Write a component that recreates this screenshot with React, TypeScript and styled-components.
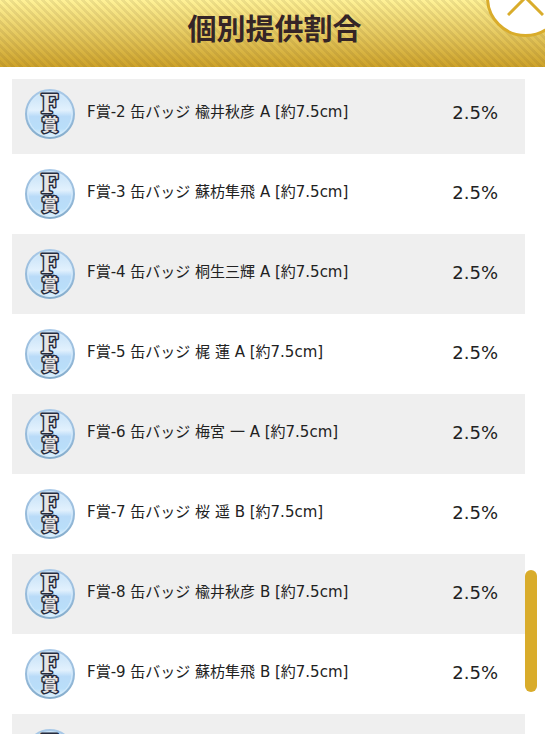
import React from 'react';
import styled, { createGlobalStyle } from 'styled-components';

const GlobalStyle = createGlobalStyle`
  *, *::before, *::after { box-sizing: border-box; }
  body {
    margin: 0;
    overflow: hidden;
    background: #fff;
    color: #222;
    font-family: "DejaVu Sans", "Noto Sans CJK JP", sans-serif;
  }
`;

const Dialog = styled.section`
  position: relative;
  display: flex;
  flex-direction: column;
  height: 100vh;
  overflow: hidden;
`;

const Header = styled.header`
  flex: none;
  padding: 10px 22px 17px 26px;
  text-align: center;
  background:
    linear-gradient(45deg, rgba(100, 75, 30, 0.11) 25%, transparent 25% 50%, rgba(100, 75, 30, 0.11) 50% 75%, transparent 75%) 0 0 / 8px 8px,
    linear-gradient(#fff297, #cda22a);
`;

const Title = styled.h2`
  margin: 0;
  color: #352527;
  font-size: 29px;
  line-height: 40px;
  font-weight: 700;
`;

const CloseButton = styled.button`
  position: absolute;
  top: -42px;
  right: -20px;
  display: grid;
  place-items: center;
  width: 79px;
  height: 79px;
  padding: 0;
  border: 3px solid #d9ac2b;
  border-radius: 50%;
  background: #fff;
  cursor: pointer;
`;

const Content = styled.div`
  flex: 1;
  min-height: 0;
  display: flex;
  margin: 12px 8px 9px 12px;
`;

const Viewport = styled.div`
  flex: 1;
  min-width: 0;
  overflow: hidden;
`;

const PrizeList = styled.ul`
  margin: -5px 0 0;
  padding: 0;
  list-style: none;
`;

const PrizeRow = styled.li`
  display: flex;
  align-items: center;
  height: 80px;
  padding: 0 27px 0 12px;
  &:nth-child(odd) { background: #efefef; }
`;

const PrizeName = styled.span`
  flex: 1;
  margin: 0 12px 4px 11px;
  font-size: 15px;
  line-height: 24px;
`;

const Rate = styled.span`
  margin-bottom: 2px;
  font-size: 18px;
  line-height: 24px;
`;

const Track = styled.div`
  flex: none;
  display: flex;
  flex-direction: column;
  width: 12px;
`;

const TrackSpace = styled.div<{ $share: number }>`
  flex: ${({ $share }) => $share} 1 0;
`;

const Thumb = styled.div`
  flex: 122 1 0;
  border-radius: 6px;
  background: #d9ac2b;
`;

const BadgeSvg = styled.svg`
  flex: none;
  width: 52px;
  height: 52px;
`;

function Badge() {
  return (
    <BadgeSvg viewBox="0 0 52 52" role="img" aria-label="F賞">
      <defs>
        <linearGradient id="badgeFill" x1="0" y1="0" x2="0" y2="1">
          <stop offset="0" stopColor="#c3e0f7" />
          <stop offset="0.42" stopColor="#e2f1fd" />
          <stop offset="0.55" stopColor="#b9dbf8" />
          <stop offset="0.8" stopColor="#b9def9" />
          <stop offset="1" stopColor="#e4f6ff" />
        </linearGradient>
        <linearGradient id="badgeRim" x1="0" y1="0" x2="0" y2="1">
          <stop offset="0" stopColor="#a9c9e8" />
          <stop offset="1" stopColor="#86adcc" />
        </linearGradient>
      </defs>
      <circle cx="26" cy="26" r="24" fill="url(#badgeFill)" stroke="url(#badgeRim)" strokeWidth="2" />
      <circle cx="26" cy="26" r="22" fill="none" stroke="#d6ebfb" strokeWidth="1" />
      <g fill="#e6e4e2" stroke="#262b3d" strokeWidth="3" strokeLinejoin="round" textAnchor="middle" paintOrder="stroke" fontWeight="700">
        <text x="26" y="43" fontSize="17" fontFamily='"Noto Sans CJK JP", sans-serif'>賞</text>
        <text x="26" y="25" fontSize="29" fontFamily='"Liberation Serif", serif'>F</text>
      </g>
    </BadgeSvg>
  );
}

const prizes = [
  { name: 'F賞-2 缶バッジ 楡井秋彦 A [約7.5cm]', rate: '2.5%' },
  { name: 'F賞-3 缶バッジ 蘇枋隼飛 A [約7.5cm]', rate: '2.5%' },
  { name: 'F賞-4 缶バッジ 桐生三輝 A [約7.5cm]', rate: '2.5%' },
  { name: 'F賞-5 缶バッジ 梶 蓮 A [約7.5cm]', rate: '2.5%' },
  { name: 'F賞-6 缶バッジ 梅宮 一 A [約7.5cm]', rate: '2.5%' },
  { name: 'F賞-7 缶バッジ 桜 遥 B [約7.5cm]', rate: '2.5%' },
  { name: 'F賞-8 缶バッジ 楡井秋彦 B [約7.5cm]', rate: '2.5%' },
  { name: 'F賞-9 缶バッジ 蘇枋隼飛 B [約7.5cm]', rate: '2.5%' },
  { name: 'F賞-10 缶バッジ 桐生三輝 B [約7.5cm]', rate: '2.5%' },
];

export default function App() {
  return (
    <Dialog aria-labelledby="rates-title">
      <GlobalStyle />
      <Header>
        <Title id="rates-title">個別提供割合</Title>
      </Header>
      <CloseButton type="button" aria-label="閉じる">
        <svg width="37" height="37" viewBox="0 0 37 37" fill="none" stroke="#d9ac2b" strokeWidth="3">
          <path d="M1 1 36 36M36 1 1 36" />
        </svg>
      </CloseButton>
      <Content>
        <Viewport>
          <PrizeList>
            {prizes.map((prize) => (
              <PrizeRow key={prize.name}>
                <Badge />
                <PrizeName>{prize.name}</PrizeName>
                <Rate>{prize.rate}</Rate>
              </PrizeRow>
            ))}
          </PrizeList>
        </Viewport>
        <Track aria-hidden="true">
          <TrackSpace $share={491} />
          <Thumb />
          <TrackSpace $share={42} />
        </Track>
      </Content>
    </Dialog>
  );
}
